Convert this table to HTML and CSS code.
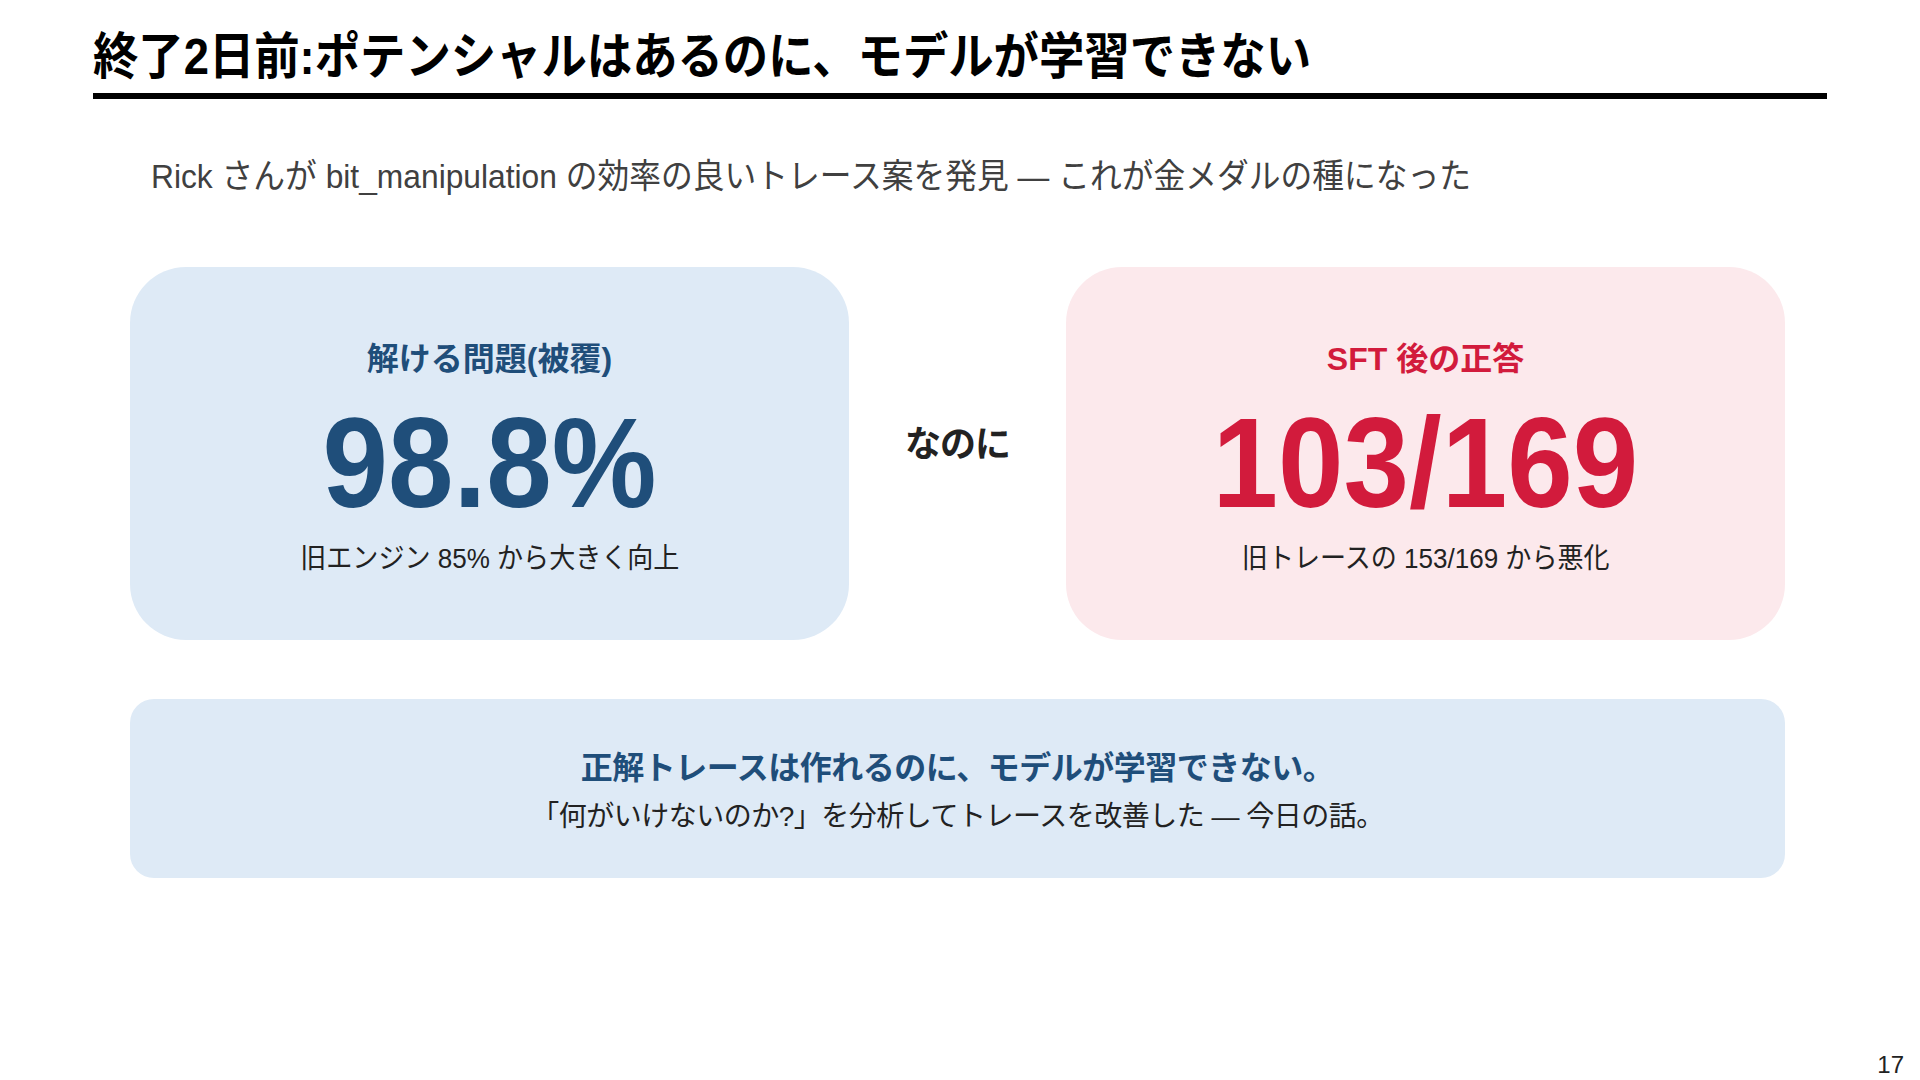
FILE: index.html
```html
<!DOCTYPE html>
<html lang="ja">
<head>
<meta charset="utf-8">
<title>終了2日前</title>
<link rel="stylesheet" href="styles.css">
</head>
<body>
<div class="slide">
  <header class="header">
    <h1 class="title">終了2日前:ポテンシャルはあるのに、モデルが学習できない</h1>
  </header>
  <p class="subtitle">Rick さんが bit_manipulation の効率の良いトレース案を発見 — これが金メダルの種になった</p>
  <div class="content">
    <div class="cards">
      <div class="card card-blue">
        <div class="card-label">解ける問題(被覆)</div>
        <div class="card-value">98.8%</div>
        <div class="card-note">旧エンジン 85% から大きく向上</div>
      </div>
      <div class="connector">なのに</div>
      <div class="card card-pink">
        <div class="card-label">SFT 後の正答</div>
        <div class="card-value">103/169</div>
        <div class="card-note">旧トレースの 153/169 から悪化</div>
      </div>
    </div>
    <div class="summary">
      <div class="summary-main">正解トレースは作れるのに、モデルが学習できない。</div>
      <div class="summary-sub">「何がいけないのか?」を分析してトレースを改善した — 今日の話。</div>
    </div>
  </div>
  <footer class="footer">17</footer>
</div>
</body>
</html>
```
FILE: styles.css
```css
* { box-sizing: border-box; }
html, body { margin: 0; padding: 0; background: #ffffff; }
body {
  font-family: "Liberation Sans", "Noto Sans CJK JP", sans-serif;
  color: #222222;
}
.slide {
  width: 1920px;
  height: 1080px;
  display: flex;
  flex-direction: column;
  overflow: hidden;
}
.header {
  margin: 0 93px;
  padding-top: 28px;
  padding-bottom: 7px;
  border-bottom: 6px solid #000000;
}
.title {
  margin: 0;
  font-size: 50px;
  line-height: 58px;
  font-weight: 700;
  color: #000000;
  white-space: nowrap;
  transform: scaleX(0.907);
  transform-origin: left center;
}
.subtitle {
  margin: 55px 0 0 151px;
  font-size: 34px;
  line-height: 44px;
  color: #404040;
  white-space: nowrap;
  transform: scaleX(0.934);
  transform-origin: left center;
}
.content {
  margin: 69px 0 0 130px;
  width: 1655px;
  display: flex;
  flex-direction: column;
  gap: 59px;
}
.cards {
  display: flex;
  align-items: stretch;
}
.card {
  width: 719px;
  height: 373px;
  border-radius: 56px;
  display: flex;
  flex-direction: column;
  align-items: center;
  padding-top: 73px;
}
.card-blue { background: #deeaf6; color: #1f4e7a; }
.card-pink { background: #fce9ec; color: #d21b3c; }
.card-label {
  font-size: 32px;
  line-height: 38px;
  font-weight: 700;
}
.card-value {
  margin-top: 21px;
  font-size: 128px;
  line-height: 128px;
  font-weight: 700;
  white-space: nowrap;
  transform: scaleX(0.92);
}
.card-note {
  margin-top: 14px;
  font-size: 28px;
  line-height: 36px;
  color: #222222;
  white-space: nowrap;
  transform: scaleX(0.93);
}
.connector {
  width: 217px;
  display: flex;
  align-items: center;
  justify-content: center;
  padding-bottom: 25px;
  font-size: 36px;
  font-weight: 700;
  letter-spacing: -1px;
  color: #222222;
}
.summary {
  height: 179px;
  border-radius: 24px;
  background: #deeaf6;
  display: flex;
  flex-direction: column;
  align-items: center;
  padding-top: 47px;
}
.summary-main {
  font-size: 32px;
  line-height: 44px;
  font-weight: 700;
  letter-spacing: -0.5px;
  color: #1f4e7a;
}
.summary-sub {
  margin-top: 7px;
  font-size: 28px;
  line-height: 40px;
  letter-spacing: -0.5px;
  color: #222222;
}
.footer {
  margin-top: auto;
  padding: 0 16px 3px 0;
  text-align: right;
  font-size: 24px;
  line-height: 24px;
  color: #222222;
}
```
